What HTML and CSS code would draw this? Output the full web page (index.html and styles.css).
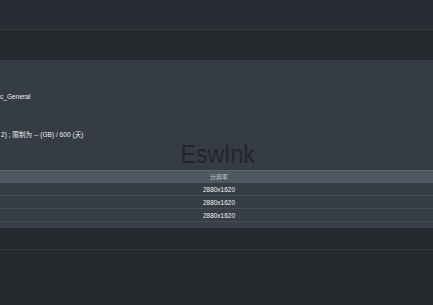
FILE: index.html
```html
<!DOCTYPE html>
<html lang="zh">
<head>
<meta charset="utf-8">
<title>EswInk</title>
<link rel="stylesheet" href="styles.css">
</head>
<body>
<header class="topbar"></header>
<div class="subbar"></div>
<main class="panel">
  <div class="info">
    <p class="line first">c_General</p>
    <p class="line second">2) ; 限制为 -- (GB) / 600 (天)</p>
  </div>
  <div class="watermark"><span class="mark">EswInk</span></div>
  <table class="grid">
    <thead>
      <tr><th>分辨率</th></tr>
    </thead>
    <tbody>
      <tr><td>2880x1620</td></tr>
      <tr><td>2880x1620</td></tr>
      <tr><td>2880x1620</td></tr>
    </tbody>
  </table>
  <div class="grid-foot"></div>
</main>
<section class="lower"></section>
<section class="bottom"></section>
</body>
</html>
```
FILE: styles.css
```css
html, body {
  margin: 0;
  padding: 0;
}
body {
  width: 433px;
  height: 305px;
  overflow: hidden;
  background: #25282d;
  font-family: "Liberation Sans", "Noto Sans CJK SC", sans-serif;
  color: #e6e8ea;
}
.topbar {
  height: 29px;
  background: #282b31;
  border-bottom: 1px solid #33373d;
}
.subbar {
  height: 30px;
  background: #26292e;
}
.panel {
  background: #363c44;
  padding-top: 32px;
}
.line {
  margin: 0;
  height: 10px;
  line-height: 10px;
  font-size: 6.6px;
  white-space: nowrap;
  color: #eceef0;
}
.second {
  margin-top: 28px;
  padding-left: 1px;
}
.watermark {
  height: 30px;
  line-height: 28px;
  text-align: center;
  padding-left: 2px;
}
.mark {
  display: inline-block;
  font-size: 26.5px;
  color: #22262b;
  transform: scaleX(0.87);
}
.grid {
  width: 100%;
  border-collapse: collapse;
  font-size: 6.5px;
}
.grid th {
  height: 12px;
  padding: 0 0 0 5px;
  background: #4f5862;
  border-top: 1px solid #5c6570;
  font-weight: normal;
  color: #c3c8ce;
  font-size: 6px;
  line-height: 12px;
  box-shadow: 0 -1px 0 #2c3137;
}
.grid td {
  height: 11px;
  padding: 1px 0 0 5px;
  line-height: 11px;
  text-align: center;
  background: #373d45;
  border-bottom: 1px solid #464d56;
  color: #eef0f2;
}
.grid-foot {
  height: 6px;
  background: #393f47;
}
.lower {
  height: 21px;
  background: #25282d;
  border-bottom: 1px solid #34383e;
}
.bottom {
  height: 60px;
  background: #25282d;
}
```
